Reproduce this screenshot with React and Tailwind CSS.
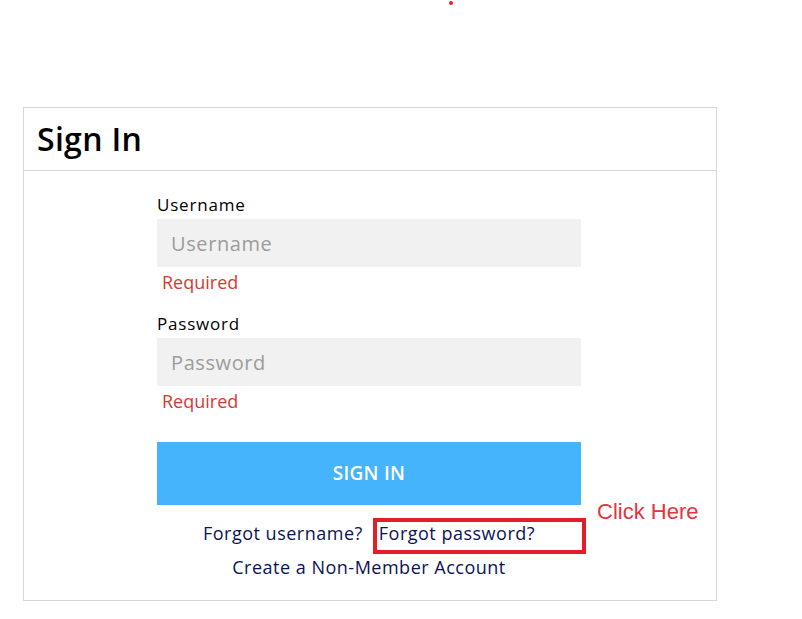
export default function App() {
  const font = { fontFamily: '"Open Sans", "Noto Sans", sans-serif' }
  return (
    <div className="relative w-[802px] h-[619px] bg-white" style={font}>
      <div className="absolute left-[449px] top-[1px] w-[4px] h-[4px] rounded-full bg-[#e4202a]" />

      <div className="pt-[107px] pl-[23px]">
        <div className="relative w-[694px] h-[494px] border border-[#d6d6d6]">
          <div className="h-[63px] border-b border-[#d6d6d6] flex items-center px-[13px]">
            <h1 className="text-[32px] font-semibold text-black leading-none tracking-[0.3px]">Sign In</h1>
          </div>

          <div className="w-[424px] ml-[133px] pt-[22px]">
            <label className="block text-[17px] leading-6 tracking-[0.8px] text-black">Username</label>
            <input
              placeholder="Username"
              className="mt-[2px] w-full h-[48px] bg-[#f1f1f1] px-[14px] text-[20px] tracking-[0.6px] text-black placeholder:text-[#9c9c9c] outline-none"
            />
            <div className="mt-[3px] ml-[5px] text-[18px] leading-6 text-[#d23b30]">Required</div>

            <label className="block mt-[18px] text-[17px] leading-6 tracking-[0.8px] text-black">Password</label>
            <input
              type="password"
              placeholder="Password"
              className="mt-[2px] w-full h-[48px] bg-[#f1f1f1] px-[14px] text-[20px] tracking-[0.6px] text-black placeholder:text-[#9c9c9c] outline-none"
            />
            <div className="mt-[3px] ml-[5px] text-[18px] leading-6 text-[#d23b30]">Required</div>

            <button className="mt-[29px] w-full h-[63px] bg-[#46b3fd] text-white text-[19px] tracking-[0.3px] font-semibold">
              SIGN IN
            </button>

            <div className="mt-[16px] flex justify-center gap-[16px] text-[18px] leading-6 tracking-[0.5px] text-[#0b1357]">
              <a href="#">Forgot username?</a>
              <a href="#">Forgot password?</a>
            </div>
            <div className="mt-[10px] text-center text-[18px] leading-6 tracking-[0.5px] text-[#0b1357]">
              <a href="#">Create a Non-Member Account</a>
            </div>
          </div>

          <div className="absolute left-[349px] top-[410px] w-[213px] h-[36px] border-[4px] border-[#e41e26]" />
          <div
            className="absolute left-[573px] top-[392px] text-[22px] leading-6 text-[#e8323c]"
            style={{ fontFamily: '"Liberation Sans", Arial, sans-serif' }}
          >
            Click Here
          </div>
        </div>
      </div>
    </div>
  )
}
